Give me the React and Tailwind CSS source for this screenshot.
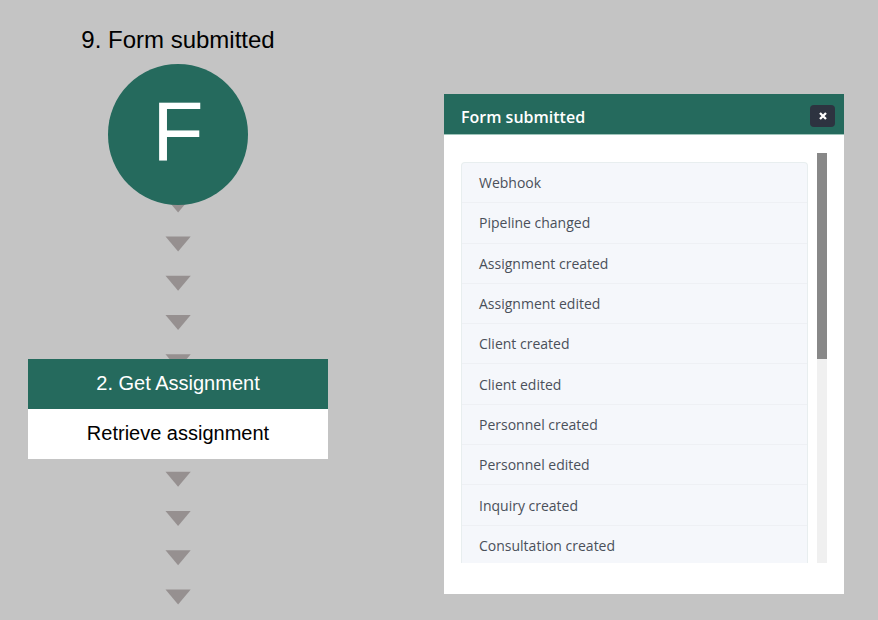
const triggers = [
  'Webhook',
  'Pipeline changed',
  'Assignment created',
  'Assignment edited',
  'Client created',
  'Client edited',
  'Personnel created',
  'Personnel edited',
  'Inquiry created',
  'Consultation created',
];

const ARROW_STEP = 39.2;

function Connector() {
  return (
    <svg className="absolute left-[165px] top-[197px]" width="26" height="423" viewBox="0 0 26 423" aria-hidden="true">
      {Array.from({ length: 11 }, (_, i) => {
        const y = 0.4 + i * ARROW_STEP;
        return <polygon key={i} points={`0.5,${y} 25.7,${y} 13.1,${y + 15}`} fill="#969090" />;
      })}
    </svg>
  );
}

function Flow() {
  return (
    <section className="absolute inset-0" aria-label="Workflow">
      <Connector />
      <div className="absolute left-7 top-6 flex w-[300px] flex-col items-center">
        <h1 className="text-2xl leading-8 text-black">9. Form submitted</h1>
        <div className="mt-2 flex h-[141px] w-[140px] items-center justify-center rounded-full bg-[#256a5d] pb-2 text-[84px] leading-none text-white">
          F
        </div>
      </div>
      <div className="absolute left-7 top-[359px] w-[300px] text-center text-xl">
        <div className="flex h-[50px] items-center justify-center bg-[#256a5d] pb-[2px] text-white">2. Get Assignment</div>
        <div className="flex h-[50px] items-center justify-center bg-white pb-[2px] text-black">Retrieve assignment</div>
      </div>
    </section>
  );
}

function TriggerDialog() {
  return (
    <section
      role="dialog"
      aria-labelledby="dialog-title"
      className="absolute right-[34px] top-[94px] w-[400px] bg-white pb-[31px] font-['Open_Sans',sans-serif]"
    >
      <header className="flex h-[41px] items-center justify-between border-b border-[#9fc4ba] bg-[#256a5d] pl-[17px] pr-[9px]">
        <h2 id="dialog-title" className="pt-[6px] text-base font-semibold text-white">Form submitted</h2>
        <button
          type="button"
          aria-label="Close"
          className="mt-1 flex h-[22px] w-[25px] items-center justify-center rounded bg-[#2d3340] text-white"
        >
          <svg width="8" height="8" viewBox="0 0 8 8" aria-hidden="true">
            <path d="M1 1L7 7M7 1L1 7" stroke="currentColor" strokeWidth="2.3" />
          </svg>
        </button>
      </header>
      <div className="mx-[17px] mt-[18px] flex h-[410px] gap-[9px] overflow-hidden">
        <ul className="mt-[9px] grid h-[404px] flex-1 auto-rows-fr rounded-t border border-b-0 border-[#e8eeef] bg-[#f5f7fb]">
          {triggers.map((name) => (
            <li key={name} className="border-b border-[#eef0f4]">
              <button type="button" className="flex h-full w-full items-center pl-[17px] pt-px text-left text-sm text-[#4a505a]">
                {name}
              </button>
            </li>
          ))}
        </ul>
        <div className="w-[10px] bg-[#f0f0f0]" aria-hidden="true">
          <div className="h-[206px] bg-[#888888]" />
        </div>
      </div>
    </section>
  );
}

export default function App() {
  return (
    <main className="relative h-screen min-h-[620px] overflow-hidden bg-[#c4c4c4] font-['Liberation_Sans',Arial,sans-serif]">
      <Flow />
      <TriggerDialog />
    </main>
  );
}
